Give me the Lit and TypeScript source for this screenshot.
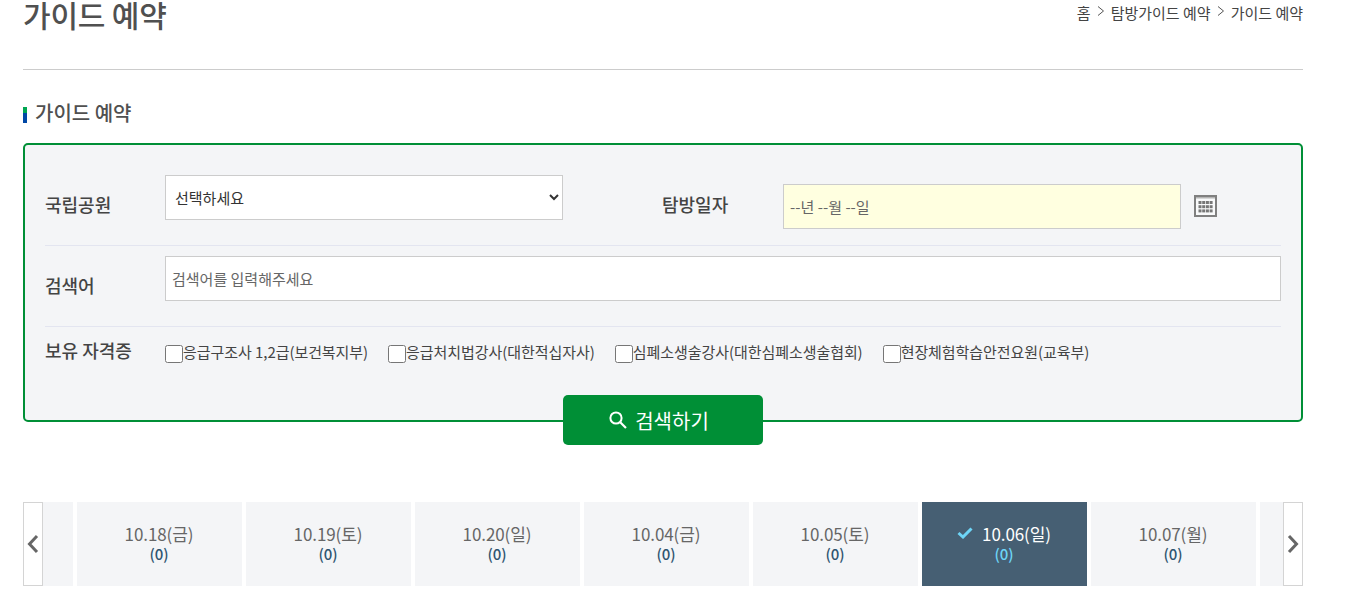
import { LitElement, html, css, svg } from "lit";
import { customElement } from "lit/decorators.js";

const chevron = svg`<svg class="crumb-sep" width="10" height="12" viewBox="0 0 10 12"><path d="M2 1.5 L7.5 6 L2 10.5" fill="none" stroke="#555" stroke-width="1"/></svg>`;

const quals = [
  "응급구조사 1,2급(보건복지부)",
  "응급처치법강사(대한적십자사)",
  "심폐소생술강사(대한심폐소생술협회)",
  "현장체험학습안전요원(교육부)",
];

const days: ReadonlyArray<readonly [string, boolean]> = [
  ["", false],
  ["10.18(금)", false],
  ["10.19(토)", false],
  ["10.20(일)", false],
  ["10.04(금)", false],
  ["10.05(토)", false],
  ["10.06(일)", true],
  ["10.07(월)", false],
  ["", false],
];

@customElement("app-root")
export class AppRoot extends LitElement {
  static styles = css`
    :host {
      display: block;
      height: 607px;
      overflow: hidden;
      background: #fff;
      font-family: "Noto Sans CJK KR", "Noto Sans", sans-serif;
      color: #444;
    }
    .page { width: 1280px; margin-left: 23px; }
    .head {
      height: 69px;
      box-sizing: content-box;
      border-bottom: 1px solid #ccc;
      display: flex;
      justify-content: space-between;
      align-items: flex-start;
    }
    h1 {
      margin: -8px 0 0;
      font-size: 30px;
      line-height: 44px;
      font-weight: 500;
      color: #505050;
      letter-spacing: -0.2px;
    }
    .crumbs {
      display: flex;
      align-items: center;
      gap: 5px;
      height: 24px;
      font-size: 15px;
      color: #444;
    }
    .crumb-sep { display: block; margin-top: -3px; }
    h2 {
      display: flex;
      align-items: center;
      gap: 8px;
      margin: 28px 0 0;
      height: 30px;
      font-size: 20px;
      line-height: 30px;
      font-weight: 500;
      color: #505050;
    }
    .mark {
      width: 4px;
      height: 16px;
      background: linear-gradient(#00a651 0 6px, #0047a5 6px);
      margin-top: 4px;
    }
    .box {
      box-sizing: border-box;
      margin-top: 15px;
      height: 279px;
      background: #f4f5f7;
      border: 2px solid #008f36;
      border-radius: 5px;
      padding: 0 20px;
    }
    .row { display: flex; }
    .row1 { height: 101px; border-bottom: 1px solid #e3e5f0; box-sizing: border-box; }
    .row2 { height: 81px; border-bottom: 1px solid #e3e5f0; box-sizing: border-box; padding-top: 10px; }
    .row3 { padding-top: 10px; }
    .label {
      width: 120px;
      flex: none;
      font-size: 18px;
      font-weight: 500;
      color: #444;
      line-height: 26px;
    }
    .row1 .label { margin-top: 46px; }
    .row2 .label { margin-top: 16px; }
    select, input.text {
      box-sizing: border-box;
      height: 45px;
      border: 1px solid #ccc;
      background: #fff;
      font-family: inherit;
      font-size: 15px;
      color: #333;
      border-radius: 0;
      outline: none;
    }
    select { width: 398px; margin-top: 30px; padding: 0 5px; }
    .label.second { width: 121px; margin-left: 99px; }
    input.date {
      width: 398px;
      margin-top: 39px;
      background: #ffffe0;
      padding: 0 6px;
      letter-spacing: 0.03px;
    }
    input.text::placeholder { color: #666; opacity: 1; }
    .cal { margin: 50px 0 0 13px; display: block; }
    input.search { flex: 1; padding: 0 6px; }
    .label.quals { line-height: 26px; margin-top: 0; }
    .checks { display: flex; gap: 20px; padding-top: 4px; }
    .check {
      display: flex;
      align-items: center;
      font-size: 15px;
      line-height: 22px;
      color: #444;
      letter-spacing: -0.06px;
    }
    .check input { width: 18px; height: 18px; margin: 4px 0 0; flex: none; }
    .btn-wrap { display: flex; justify-content: center; margin-top: -27px; position: relative; }
    .btn {
      width: 200px;
      height: 50px;
      border: 0;
      border-radius: 5px;
      background: #008f36;
      color: #fff;
      font-family: inherit;
      font-size: 20px;
      display: flex;
      align-items: center;
      justify-content: center;
      gap: 8px;
      padding: 0 8px 0 0;
    }
    .carousel { display: flex; height: 84px; margin-top: 57px; }
    .arrow {
      box-sizing: border-box;
      width: 20px;
      flex: none;
      border: 1px solid #d4d4d4;
      background: #fff;
      display: flex;
      align-items: center;
      justify-content: center;
    }
    .view { flex: 1; overflow: hidden; }
    .track { display: flex; gap: 4px; margin-left: -135px; width: 1600px; height: 100%; }
    .day {
      box-sizing: border-box;
      width: 165px;
      flex: none;
      background: #f4f5f7;
      display: flex;
      flex-direction: column;
      align-items: center;
      justify-content: center;
      color: #666;
      padding: 0 1px 4px 0;
    }
    .date { display: flex; align-items: center; font-size: 17px; line-height: 23px; letter-spacing: -0.1px; }
    .count { font-size: 15px; line-height: 18px; font-weight: 500; color: #2f5470; }
    .day.on { background: #465f73; color: #fff; }
    .day.on .count { color: #6dd5f7; }
    .day.on .date svg { margin-right: 9px; }
  `;

  render() {
    return html`<div class="page">
      <div class="head">
        <h1>가이드 예약</h1>
        <div class="crumbs"><span>홈</span>${chevron}<span>탐방가이드 예약</span>${chevron}<span>가이드 예약</span></div>
      </div>
      <h2><span class="mark"></span>가이드 예약</h2>
      <div class="box">
        <div class="row row1">
          <div class="label">국립공원</div>
          <select><option>선택하세요</option></select>
          <div class="label second">탐방일자</div>
          <input class="text date" type="text" placeholder="--년 --월 --일" />
          <svg class="cal" width="23" height="22" viewBox="0 0 23 22">
            <rect x="1" y="1" width="21" height="20" fill="#f9fafb" stroke="#808080" stroke-width="2"/>
            <rect x="2" y="2" width="19" height="1.5" fill="#b5b5b5"/>
            ${[0, 1, 2].map((r) => [0, 1, 2, 3].map((c) => svg`<rect x="${4.5 + c * 3.7}" y="${6 + r * 4.2}" width="3" height="3" fill="#777"/>`))}
          </svg>
        </div>
        <div class="row row2">
          <div class="label">검색어</div>
          <input class="text search" type="text" placeholder="검색어를 입력해주세요" />
        </div>
        <div class="row row3">
          <div class="label quals">보유 자격증</div>
          <div class="checks">
            ${quals.map((q) => html`<label class="check"><input type="checkbox" />${q}</label>`)}
          </div>
        </div>
      </div>
      <div class="btn-wrap">
        <button class="btn">
          <svg width="18" height="18" viewBox="0 0 18 18"><circle cx="7" cy="7" r="5.6" fill="none" stroke="#fff" stroke-width="2"/><path d="M11 11 L17 17" stroke="#fff" stroke-width="2.2"/></svg>
          검색하기
        </button>
      </div>
      <div class="carousel">
        <div class="arrow"><svg width="14" height="20" viewBox="0 0 14 20"><path d="M11 2 L3.5 10 L11 18" fill="none" stroke="#666" stroke-width="3"/></svg></div>
        <div class="view"><div class="track">
          ${days.map(([d, on]) => html`<div class="day ${on ? "on" : ""}">
            ${d
              ? html`<div class="date">${on ? html`<svg width="16" height="12" viewBox="0 0 16 12"><path d="M1.5 6 L6 10 L14.5 1.5" fill="none" stroke="#6dd5f7" stroke-width="3"/></svg>` : ""}${d}</div>
                  <div class="count">(0)</div>`
              : ""}
          </div>`)}
        </div></div>
        <div class="arrow"><svg width="14" height="20" viewBox="0 0 14 20"><path d="M3 2 L10.5 10 L3 18" fill="none" stroke="#666" stroke-width="3"/></svg></div>
      </div>
    </div>`;
  }
}
